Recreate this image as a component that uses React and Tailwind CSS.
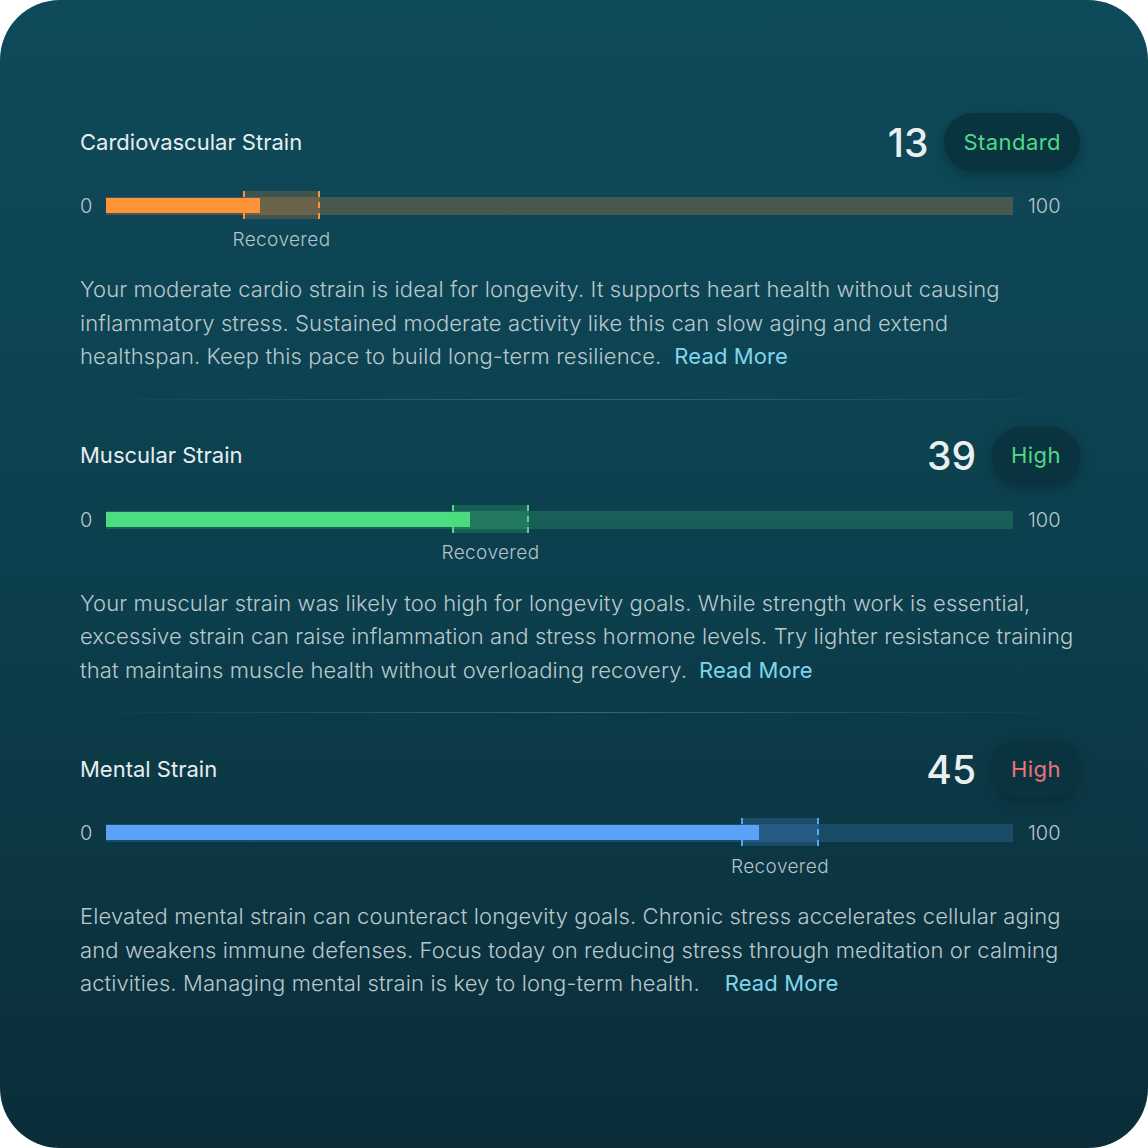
import React from "react";

const sections = [
  {
    title: "Cardiovascular Strain",
    value: "13",
    badge: "Standard",
    badgeColor: "text-[#4fd98a]",
    fill: 154,
    box: [137, 214],
    colors: {
      track: "bg-[#f7913a]/25",
      fill: "bg-[#ff9338]",
      box: "bg-[#f7913a]/20",
      border: "border-[#ff9338]",
    },
    lines: [
      "Your moderate cardio strain is ideal for longevity. It supports heart health without causing",
      "inflammatory stress. Sustained moderate activity like this can slow aging and extend",
      "healthspan. Keep this pace to build long-term resilience.",
    ],
    gap: "ml-[13px]",
  },
  {
    title: "Muscular Strain",
    value: "39",
    badge: "High",
    badgeColor: "text-[#4fd98a]",
    fill: 364,
    box: [346, 423],
    colors: {
      track: "bg-[#4ade80]/20",
      fill: "bg-[#4ade80]",
      box: "bg-[#4ade80]/20",
      border: "border-[#4ade80]",
    },
    lines: [
      "Your muscular strain was likely too high for longevity goals. While strength work is essential,",
      "excessive strain can raise inflammation and stress hormone levels. Try lighter resistance training",
      "that maintains muscle health without overloading recovery.",
    ],
    gap: "ml-[12px]",
  },
  {
    title: "Mental Strain",
    value: "45",
    badge: "High",
    badgeColor: "text-[#f0727a]",
    fill: 653,
    box: [635, 713],
    colors: {
      track: "bg-[#5aa2f8]/20",
      fill: "bg-[#5aa2f8]",
      box: "bg-[#5aa2f8]/20",
      border: "border-[#5aa2f8]",
    },
    lines: [
      "Elevated mental strain can counteract longevity goals. Chronic stress accelerates cellular aging",
      "and weakens immune defenses. Focus today on reducing stress through meditation or calming",
      "activities. Managing mental strain is key to long-term health.",
    ],
    gap: "ml-[25px]",
  },
];

function Section({ s, last }) {
  return (
    <div className="flex flex-col">
      <div className="flex h-[58px] items-center justify-between">
        <div className="text-[22px] font-normal text-[#e6eef0]">{s.title}</div>
        <div className="flex items-center gap-[16px]">
          <div className="text-[39px] font-medium leading-none text-[#eaf0f2]">{s.value}</div>
          <div
            className={`flex h-[58px] items-center rounded-full bg-[#0a3340] px-[19px] text-[22px] tracking-[0.02em] shadow-[0_4px_14px_rgba(0,0,0,0.25)] ${s.badgeColor}`}
          >
            {s.badge}
          </div>
        </div>
      </div>

      <div className="mt-[21px] flex h-[28px] items-center">
        <div className="w-[26px] text-[20px] font-light text-[#b9c8cc]">0</div>
        <div className={`relative h-[18px] w-[907px] ${s.colors.track}`}>
          <div className={`absolute left-0 top-[1px] h-[15px] ${s.colors.fill}`} style={{ width: s.fill }} />
          <div
            className={`absolute top-[-6px] h-[28px] border-x-2 border-dashed ${s.colors.box} ${s.colors.border}`}
            style={{ left: s.box[0], width: s.box[1] - s.box[0] }}
          />
        </div>
        <div className="ml-[15px] text-[20px] font-light text-[#b9c8cc]">100</div>
      </div>

      <div className="relative mt-[8px] h-[24px]">
        <div
          className="absolute top-0 flex h-[24px] -translate-x-1/2 items-center whitespace-nowrap text-[19px] font-light tracking-[0.02em] text-[#b3c3c7]"
          style={{ left: 26 + (s.box[0] + s.box[1]) / 2 }}
        >
          Recovered
        </div>
      </div>

      <p className="mt-[21px] text-[22px] font-light leading-[33.5px] tracking-[0.005em] text-[#b9c8cc]">
        {s.lines.map((l, i) => (
          <span key={i} className="block whitespace-nowrap">
            {l}
            {i === 2 && (
              <span className={`${s.gap} font-normal text-[#7fd6ea]`}>Read More</span>
            )}
          </span>
        ))}
      </p>

      {!last && (
        <div className="mb-[27px] mt-[25px] h-px w-full bg-gradient-to-r from-transparent via-[#2f6b7a] to-transparent" />
      )}
    </div>
  );
}

export default function App() {
  return (
    <div className="h-[1148px] w-[1148px] bg-white" style={{ fontFamily: "Inter, 'Noto Sans', sans-serif" }}>
      <div className="h-[1148px] w-[1148px] overflow-hidden rounded-[60px] bg-gradient-to-b from-[#0f4a5a] via-[#0c3f4d] to-[#0a2d38] pl-[80px] pr-[68px] pt-[113px]">
        {sections.map((s, i) => (
          <Section key={i} s={s} last={i === sections.length - 1} />
        ))}
      </div>
    </div>
  );
}
